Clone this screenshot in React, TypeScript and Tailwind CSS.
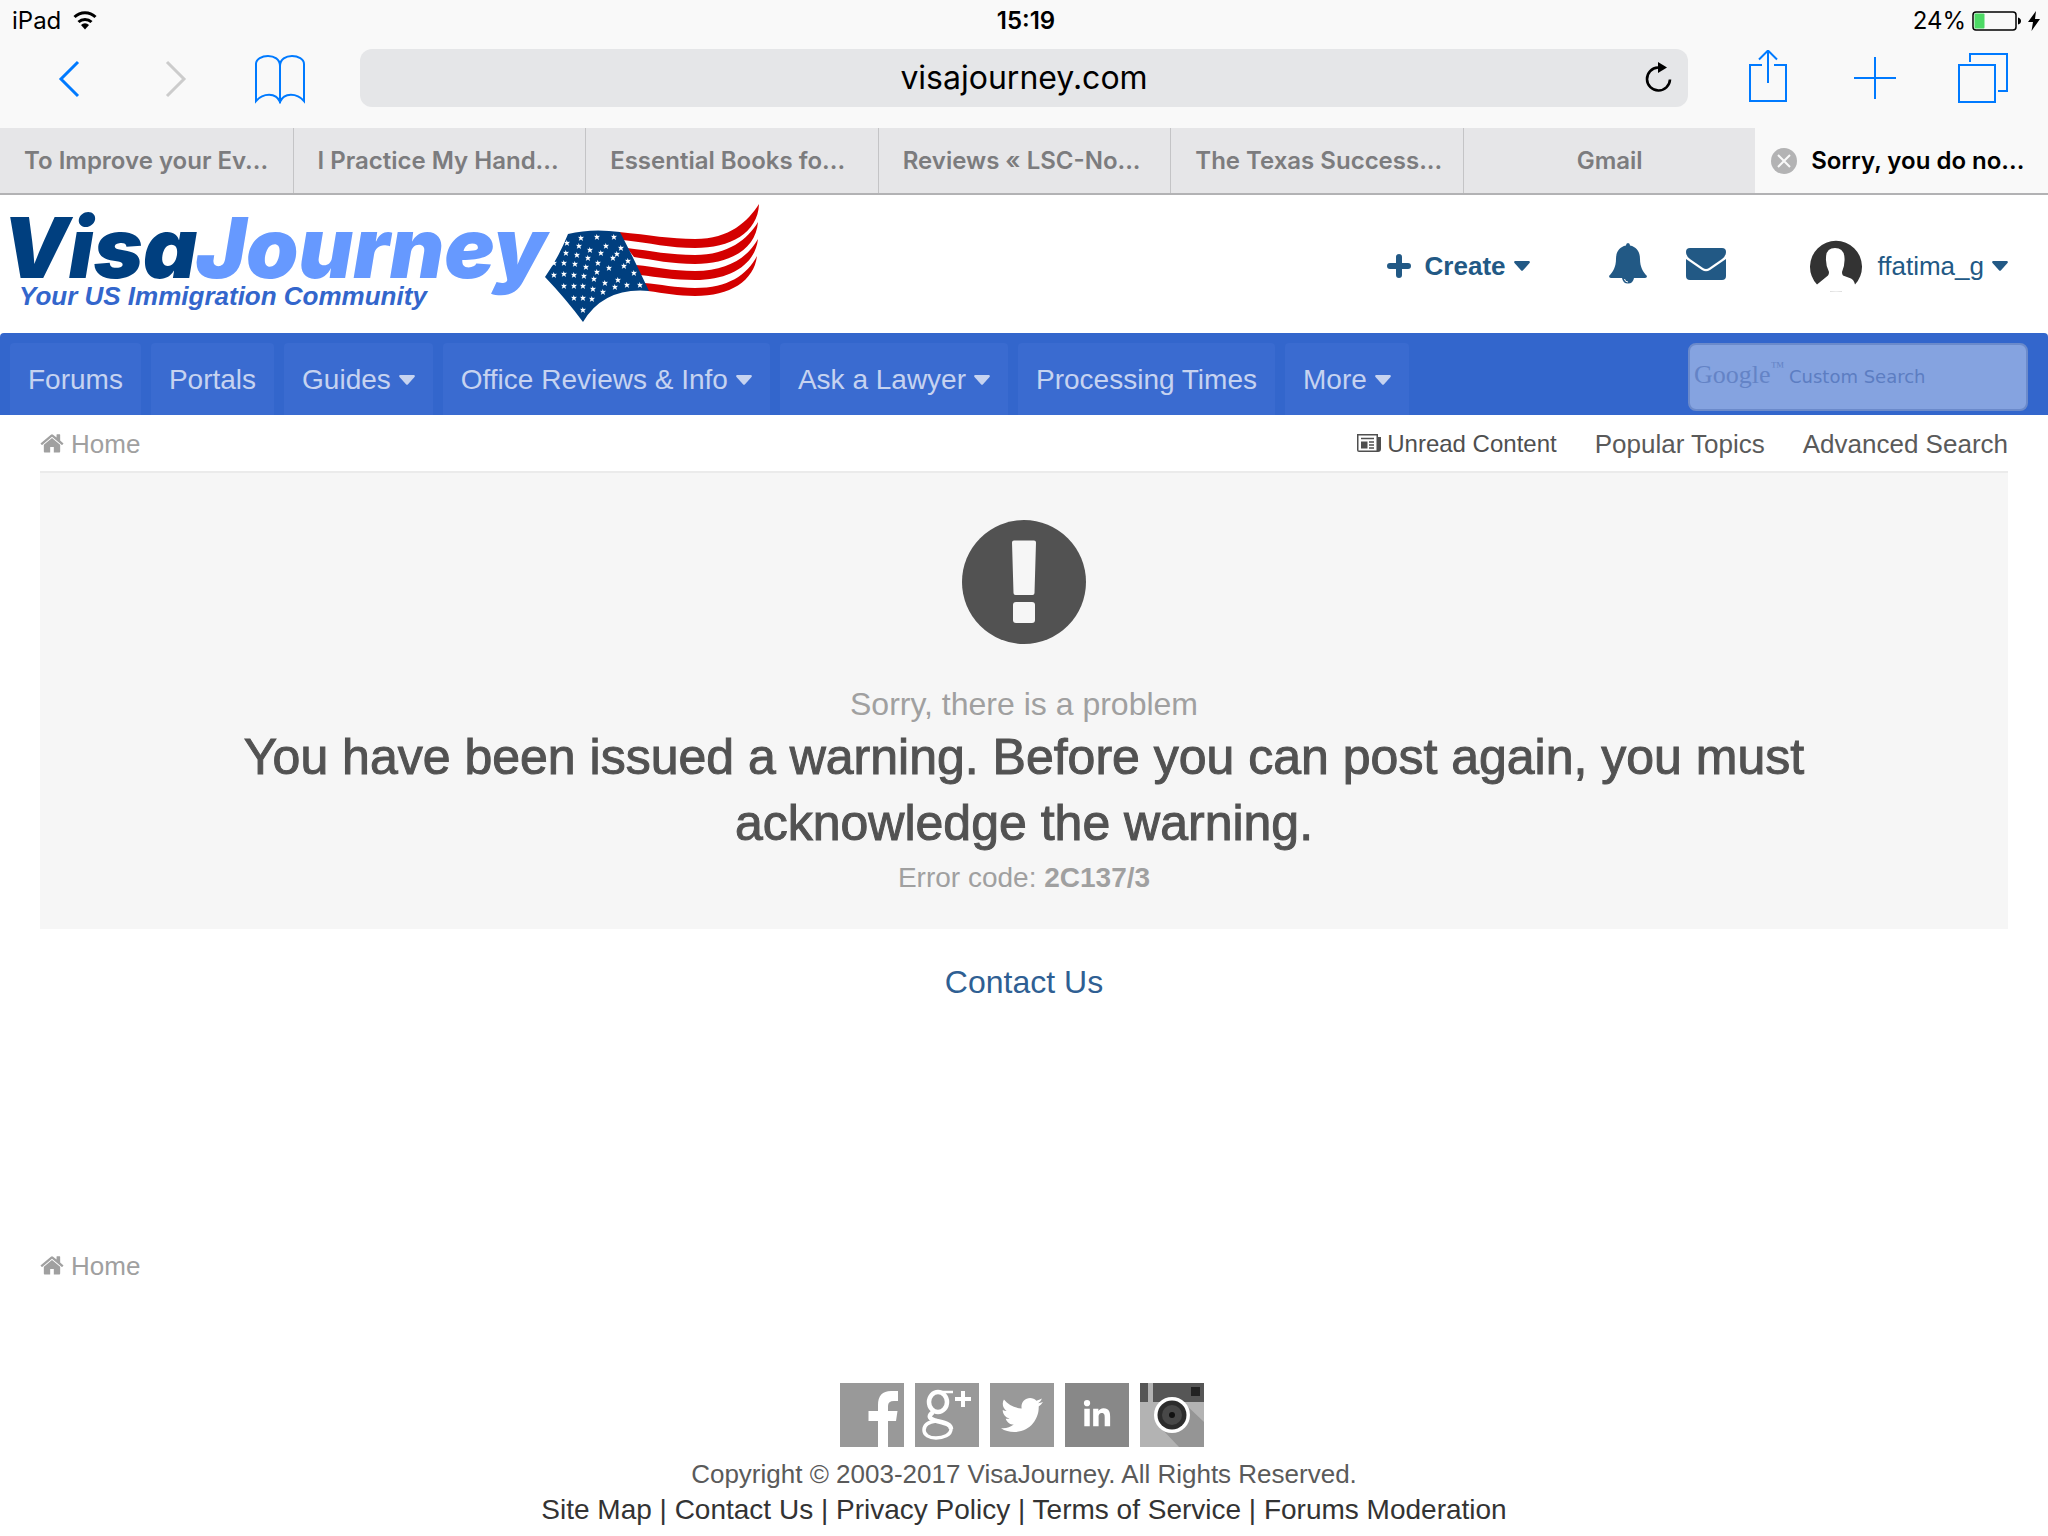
import { Fragment, ReactElement, ReactNode } from 'react';
import { FaLinkedinIn, FaTwitter } from 'react-icons/fa';

type NavItem = { label: string; hasMenu?: boolean };
type SocialTileProps = { label: string; children: ReactNode };

const TABS = [
  'To Improve your Ev...',
  'I Practice My Hand...',
  'Essential Books fo...',
  'Reviews « LSC-No...',
  'The Texas Success...',
  'Gmail',
];

const NAV_ITEMS: NavItem[] = [
  { label: 'Forums' },
  { label: 'Portals' },
  { label: 'Guides', hasMenu: true },
  { label: 'Office Reviews & Info', hasMenu: true },
  { label: 'Ask a Lawyer', hasMenu: true },
  { label: 'Processing Times' },
  { label: 'More', hasMenu: true },
];

const FOOTER_LINKS = [
  'Site Map',
  'Contact Us',
  'Privacy Policy',
  'Terms of Service',
  'Forums Moderation',
];

// star centres in the flag's own units
const STARS = [
  [37, 48], [51, 43], [67, 42], [84, 42],
  [36, 58], [49, 51], [60, 55], [76, 51], [91, 53],
  [24, 68], [34, 68], [47, 60], [58, 63], [71, 58], [87, 59],
  [24, 80], [34, 79], [45, 69], [56, 72], [68, 68], [83, 63], [98, 66],
  [44, 80], [54, 81], [67, 77], [79, 73], [94, 71],
  [34, 91], [44, 91], [53, 91], [64, 84], [75, 88], [88, 85], [104, 78],
  [63, 94], [73, 97], [85, 92], [97, 90], [110, 90],
  [44, 103], [53, 103], [62, 104], [53, 115],
];

const Caret = (): ReactElement => (
  <svg className="h-2.5 w-4" viewBox="0 0 16 10" fill="currentColor">
    <path d="M1 0h14q1.500 .500 .500 2L8.800 9.500q-.800 .700-1.600 0L.500 2Q-.500 .500 1 0z" />
  </svg>
);

const StatusBar = (): ReactElement => (
  <div className="grid h-[42px] grid-cols-3 items-center pr-2 pl-3 text-2xl leading-8">
    <div className="flex items-center gap-3">
      <span>iPad</span>
      <svg className="h-5 w-6" viewBox="0 0 24 20">
        <path
          d="M1.500 6a15 15 0 0 1 21 0M5.500 11a9.500 9.500 0 0 1 13 0"
          fill="none"
          stroke="#000"
          strokeWidth="3"
        />
        <path d="M8 14a5.700 5.700 0 0 1 8 0L12 18.500z" />
      </svg>
    </div>
    <span className="text-center font-semibold">15:19</span>
    <div className="flex items-center justify-end gap-1.5">
      <span>24%</span>
      <svg className="h-5 w-[50px]" viewBox="0 0 50 20">
        <rect
          x="1"
          y="1"
          width="43"
          height="18"
          rx="3"
          fill="none"
          stroke="#000"
          strokeWidth="1.500"
        />
        <rect x="2.500" y="2.500" width="10" height="15" rx="1" fill="#4cd964" />
        <path d="M46 6.500q3 1 3 3.500t-3 3.500z" />
      </svg>
      <svg className="h-5 w-3" viewBox="0 0 12 20">
        <path d="M8 0L0 11h5L3.500 20 12 8H7z" />
      </svg>
    </div>
  </div>
);

const Toolbar = (): ReactElement => (
  <div className="flex h-[86px] items-start pt-[7px] pr-10 pl-14 text-[#007aff]">
    <div className="flex h-[58px] w-76 shrink-0 items-center">
      <button type="button" aria-label="Back">
        <svg className="h-10 w-6" viewBox="0 0 24 40" fill="none">
          <path d="M22 4L5 21l17 17" stroke="currentColor" strokeWidth="3" />
        </svg>
      </button>
      <button type="button" aria-label="Forward" className="ml-[84px]">
        <svg className="h-10 w-6" viewBox="0 0 24 40" fill="none">
          <path d="M3 4l17 17L3 38" stroke="#ccc" strokeWidth="3" />
        </svg>
      </button>
      <button type="button" aria-label="Bookmarks" className="ml-[66px]">
        <svg className="h-13 w-13" viewBox="0 0 52 52" fill="none">
          <path
            d="M26 14C26 7 20 4 14 4S2 7 2 12v37c7-8 20-9 24 1 4-10 17-9 24-1V12C50 7 44 4 38 4S26 7 26 14zM26 12v39"
            stroke="currentColor"
            strokeWidth="2"
          />
        </svg>
      </button>
    </div>
    <div className="flex h-[58px] flex-1 items-center rounded-xl bg-[#e5e6e8] pr-4 text-black">
      <input
        type="text"
        aria-label="Address"
        defaultValue="visajourney.com"
        className="h-14 min-w-0 flex-1 bg-transparent pb-0.5 pl-11 text-center text-[32px] outline-none"
      />
      <button type="button" aria-label="Reload">
        <svg className="h-8 w-7" viewBox="0 0 28 32" fill="none">
          <path
            d="M14 5.500a11.500 11.500 0 1 0 12 12"
            stroke="currentColor"
            strokeWidth="2.600"
          />
          <path d="M14 0v11l9-5.500z" fill="currentColor" />
        </svg>
      </button>
    </div>
    <div className="ml-[61px] flex h-[58px] items-center">
      <button type="button" aria-label="Share">
        <svg className="h-14 w-[38px]" viewBox="0 0 38 56" fill="none">
          <path
            d="M13 15H1v36h36V15H25M19 1v32M10 9.500L19 .500l9 9"
            stroke="currentColor"
            strokeWidth="2"
          />
        </svg>
      </button>
      <button type="button" aria-label="New tab" className="ml-[66px]">
        <svg className="h-11 w-11" viewBox="0 0 44 44" fill="none">
          <path d="M22 1v42M1 22h42" stroke="currentColor" strokeWidth="2" />
        </svg>
      </button>
      <button type="button" aria-label="Show tabs" className="ml-[61px]">
        <svg className="h-[50px] w-[50px]" viewBox="0 0 50 50" fill="none">
          <path
            d="M1 12h36v37H1zM12 9V1h37v37h-9"
            stroke="currentColor"
            strokeWidth="2"
          />
        </svg>
      </button>
    </div>
  </div>
);

const TabStrip = (): ReactElement => (
  <div className="grid h-[67px] grid-cols-7 border-b-2 border-[#b2b2b4] text-2xl font-semibold whitespace-nowrap">
    {TABS.map((tab) => (
      <button
        key={tab}
        type="button"
        className="border-l border-[#c4c4c6] bg-[#e6e6e8] px-6 text-left text-[#7c7c7e] first:border-l-0 last-of-type:text-center"
      >
        {tab}
      </button>
    ))}
    <div className="flex items-center justify-center gap-3.5 pr-2">
      <button type="button" aria-label="Close tab">
        <svg className="h-[26px] w-[26px]" viewBox="0 0 26 26">
          <circle cx="13" cy="13" r="13" fill="#b3b3b4" />
          <path d="M7 7l12 12M19 7L7 19" stroke="#f9f9f9" strokeWidth="2" />
        </svg>
      </button>
      <span>Sorry, you do no...</span>
    </div>
  </div>
);

const Flag = (): ReactElement => (
  <g transform="translate(530 0)">
    <g fill="#d40000">
      <path d="M89 37C120 40 140 44 165 44C200 44 218 26 229 9C228 38 200 53 165 53C140 53 120 48 93 45z" />
      <path d="M97 53C122 56 140 60 165 60C198 60 218 44 228 27C226 54 200 69 165 69C142 69 124 65 104 62z" />
      <path d="M106 70C126 72 142 76 165 76C198 76 218 62 228 44C225 70 200 85 165 85C144 85 128 82 110 80z" />
      <path d="M114 88C130 89 146 93 165 93C198 93 217 80 227 61C224 86 200 101 165 101C148 101 134 98 118 96z" />
    </g>
    <path
      d="M38 39Q62 33 90 37Q104 64 119 96Q74 92 53 127Q36 104 15 82Q29 62 38 39z"
      fill="#003f7f"
    />
    {STARS.map(([x, y]) => (
      <path
        key={`${x}-${y}`}
        transform={`translate(${x} ${y})`}
        d="M-.500-3L.600-1 3-1.200 1.300 .500 2 3 0 1.600-2.200 2.800-1.400 .400-3-1.200-.900-1z"
        fill="#fff"
      />
    ))}
  </g>
);

const Logo = (): ReactElement => (
  <a href="#home" aria-label="VisaJourney">
    <svg className="h-[138px] w-[770px]" viewBox="0 0 770 138">
      <g
        fontFamily="Inter, sans-serif"
        fontSize="84"
        fontWeight="900"
        fontStyle="italic"
      >
        <text x="2" y="83" fill="#003f7f">
          Visa
        </text>
        <text x="196" y="83" fill="#6699ff">
          Journey
        </text>
      </g>
      <text
        x="19"
        y="110"
        fontFamily="'Liberation Sans', Arial, sans-serif"
        fontSize="26"
        fontWeight="bold"
        fontStyle="italic"
        fill="#3366cc"
      >
        Your US Immigration Community
      </text>
      <Flag />
    </svg>
  </a>
);

const UserBar = (): ReactElement => (
  <div className="flex items-center pt-1 text-[26px] leading-8 text-[#225985]">
    <button type="button" className="flex items-center gap-2 font-bold">
      <svg className="mr-1.5 h-6 w-6" viewBox="0 0 24 24">
        <path
          d="M12 3v18M3 12h18"
          stroke="currentColor"
          strokeWidth="6"
          strokeLinecap="round"
        />
      </svg>
      Create
      <Caret />
    </button>
    <button type="button" aria-label="Notifications" className="ml-[79px]">
      <svg className="h-12 w-[38px]" viewBox="0 0 38 48" fill="currentColor">
        <path d="M17 3.500Q17 1 19 1t2 2.500C28 5 31 10 31 17c0 8 3 13 7 17q0 2-2 2H25q-1 5.500-6 5.500T13 36H2q-2 0-2-2c4-4 7-9 7-17C7 10 10 5 17 3.500z" />
        <path d="M15.500 37q.500 3 3.500 3" fill="none" stroke="#fff" />
      </svg>
    </button>
    <button type="button" aria-label="Messages" className="ml-[39px]">
      <svg className="h-[38px] w-10" viewBox="0 0 40 38" fill="currentColor">
        <path d="M4 1h32q4 0 4 4 0 4-4 7L23 21q-3 2-6 0L4 12Q0 9 0 5q0-4 4-4z" />
        <path d="M0 12l16 11q4 2.500 8 0l16-11v17q0 4-4 4H4q-4 0-4-4z" />
      </svg>
    </button>
    <button type="button" className="ml-[84px] flex items-center gap-2">
      <svg className="mr-2 h-[52px] w-[52px]" viewBox="0 0 52 52" fill="#333">
        <path d="M7 44.500A26 26 0 1 1 45 44.500Q44 40 41 38.500L33 35.500Q32 35 32 32 35 25 34.500 18 34 8 25 8T16 18Q15.500 25 19 32 19 34.500 18 35.500z" />
        <path d="M20 51.500q6 1 12 0" fill="none" stroke="#ddd" />
      </svg>
      ffatima_g
      <Caret />
    </button>
  </div>
);

const SearchBox = (): ReactElement => (
  <div className="relative mb-1 h-17 w-85">
    <input
      id="site-search"
      type="search"
      placeholder="Custom Search"
      className="h-full w-full rounded-lg border-2 border-[#6b8acb] bg-[#85a3e0] pb-0.5 pl-[99px] font-['DejaVu_Sans',sans-serif] text-lg text-[#3a5ba5] placeholder:text-[#5c7dc2]"
    />
    <label
      htmlFor="site-search"
      className="absolute top-3 left-1.5 flex items-start font-['Liberation_Serif',serif] text-[26px] leading-10 text-[#6483c6]"
    >
      Google
      <span className="text-sm leading-6">™</span>
    </label>
  </div>
);

const NavBar = (): ReactElement => (
  <nav className="flex h-[82px] items-end justify-between rounded-t bg-[#3366cc] pr-5 pl-2.5">
    <ul className="flex gap-2.5">
      {NAV_ITEMS.map(({ label, hasMenu }) => (
        <li key={label}>
          <a
            href="#nav"
            className="flex h-18 items-center gap-2 rounded-t-sm bg-[#3a6bd0] px-[18px] pt-0.5 text-[28px] whitespace-nowrap text-[#c6d3f0]"
          >
            {label}
            {hasMenu && <Caret />}
          </a>
        </li>
      ))}
    </ul>
    <SearchBox />
  </nav>
);

const HomeLink = (): ReactElement => (
  <a href="#home" className="flex items-center gap-[7px] text-[#a0a0a0]">
    <svg className="h-6 w-6" viewBox="50 90 1692 1692" fill="currentColor">
      <path d="M1472 992v480q0 26-19 45t-45 19h-384v-384h-256v384h-384q-26 0-45-19t-19-45v-480q0-1 .5-3t.5-3l575-474 575 474q1 2 1 6zm223-69l-62 74q-8 9-21 11h-3q-13 0-21-7l-692-577-692 577q-12 8-24 7-13-2-21-11l-62-74q-8-10-7-23.500t11-21.500l719-599q32-26 76-26t76 26l244 204v-195q0-14 9-23t23-9h192q14 0 23 9t9 23v408l219 182q10 8 11 21.500t-7 23.500z" />
    </svg>
    Home
  </a>
);

const ErrorPanel = (): ReactElement => (
  <section className="flex h-[456px] flex-col items-center bg-[#f6f6f6] pt-[47px] text-center text-[#a0a0a0]">
    <svg className="h-31 w-31" viewBox="0 0 124 124">
      <circle cx="62" cy="62" r="62" fill="#525252" />
      <path
        d="M52 20.500h20q2 0 2 2L72.500 73q0 2-2 2h-17q-2 0-2-2L50 22.500q0-2 2-2z"
        fill="#f6f6f6"
      />
      <rect x="51" y="82" width="22" height="21" rx="3" fill="#f6f6f6" />
    </svg>
    <p className="mt-10 text-[32px] leading-10">Sorry, there is a problem</p>
    <h1 className="px-40 text-[50px] leading-[66px] text-[#525252] [-webkit-text-stroke:1px_#525252]">
      You have been issued a warning. Before you can post again, you must
      acknowledge the warning.
    </h1>
    <p className="mt-1.5 text-[28px]">
      Error code: <b>2C137/3</b>
    </p>
  </section>
);

const SocialTile = ({ label, children }: SocialTileProps): ReactElement => (
  <a href="#social" aria-label={label}>
    <svg className="h-16 w-16" viewBox="0 0 64 64">
      {children}
    </svg>
  </a>
);

const SocialLinks = (): ReactElement => (
  <div className="flex justify-center gap-[11px] pr-1">
    <SocialTile label="Facebook">
      <rect width="64" height="64" fill="#999" />
      <path
        d="M38 64V38h-9.500V28H38v-6Q38 8 51 8h7v10h-4q-6 0-6 5v5h9.500L56 38h-8v26z"
        fill="#fff"
      />
    </SocialTile>
    <SocialTile label="Google Plus">
      <rect width="64" height="64" fill="#999" />
      <g fill="none" stroke="#fff">
        <ellipse cx="23" cy="19" rx="9" ry="10" strokeWidth="4.500" />
        <path d="M23 9h15" strokeWidth="2.500" />
        <path d="M18 29c-6 5-3 7 4 9 8 2 14 3 14 8" strokeWidth="4.500" />
        <path
          d="M21 38C13 39 9 42 9 47c0 5 5 8 12 8s15-3 15-9"
          strokeWidth="3.500"
        />
        <path d="M48 8v16M40 16h16" strokeWidth="4" />
      </g>
    </SocialTile>
    <SocialTile label="Twitter">
      <rect width="64" height="64" fill="#999" />
      <FaTwitter x="11" y="11" size={42} color="#fff" />
    </SocialTile>
    <SocialTile label="LinkedIn">
      <rect width="64" height="64" fill="#888" />
      <FaLinkedinIn x="17" y="17" size={30} color="#fff" />
    </SocialTile>
    <SocialTile label="Instagram">
      <rect width="64" height="64" fill="#b3b3b3" />
      <path d="M44 20L64 39v25H39L20 44z" fill="#959595" />
      <path d="M0 0h64v19H0z" fill="#565656" />
      <path d="M8 0h5v19H8z" fill="#b3b3b3" />
      <path d="M51 4h9v9h-9z" fill="#222" />
      <circle cx="32" cy="32" r="18" fill="#fff" />
      <circle cx="32" cy="32" r="14.500" fill="#2c2c2c" />
      <circle cx="32" cy="32" r="10" fill="#484848" />
      <circle cx="32" cy="32" r="3" fill="#111" />
    </SocialTile>
  </div>
);

export default function App(): ReactElement {
  return (
    <div className="min-h-screen bg-white font-['Liberation_Sans',Arial,sans-serif]">
      <div className="bg-[#f9f9f9] font-[Inter,sans-serif] text-black">
        <StatusBar />
        <Toolbar />
        <TabStrip />
      </div>
      <header className="flex h-[138px] items-center justify-between pr-10">
        <Logo />
        <UserBar />
      </header>
      <NavBar />
      <main className="px-10 text-[26px] leading-8">
        <div className="flex h-[58px] items-center justify-between border-b-2 border-[#ebebeb] pt-0.5">
          <HomeLink />
          <div className="flex items-center gap-[38px] text-[#5a5a5a]">
            <a
              href="#unread"
              className="flex items-center gap-1.5 text-2xl leading-8 text-[#4f4f4f]"
            >
              <svg className="h-5 w-6" viewBox="0 0 24 20">
                <path d="M0 0h21v3h3v12q0 3-3 3H2q-2 0-2-2z" fill="currentColor" />
                <path d="M1.500 1.500h18v15h-18z" fill="#fff" />
                <path
                  d="M4 4.500h13M12 8h5M12 11h5M12 14h5"
                  stroke="currentColor"
                  strokeWidth="1.500"
                />
                <path d="M4 7.500h6.500v7H4z" fill="currentColor" />
              </svg>
              Unread Content
            </a>
            <a href="#popular">Popular Topics</a>
            <a href="#search">Advanced Search</a>
          </div>
        </div>
        <ErrorPanel />
        <p className="mt-[35px] text-center text-[32px] leading-9">
          <a href="#contact" className="text-[#2f5f93]">
            Contact Us
          </a>
        </p>
        <div className="mt-[250px]">
          <HomeLink />
        </div>
      </main>
      <footer className="pt-[101px] text-center">
        <SocialLinks />
        <p className="mt-[9px] text-[26px] leading-9 text-[#5a5a5a]">
          Copyright © 2003-2017 VisaJourney. All Rights Reserved.
        </p>
        <p className="text-[28px] leading-9 text-[#333]">
          {FOOTER_LINKS.map((link, index) => (
            <Fragment key={link}>
              {index > 0 && ' | '}
              <a href="#footer">{link}</a>
            </Fragment>
          ))}
        </p>
      </footer>
    </div>
  );
}
